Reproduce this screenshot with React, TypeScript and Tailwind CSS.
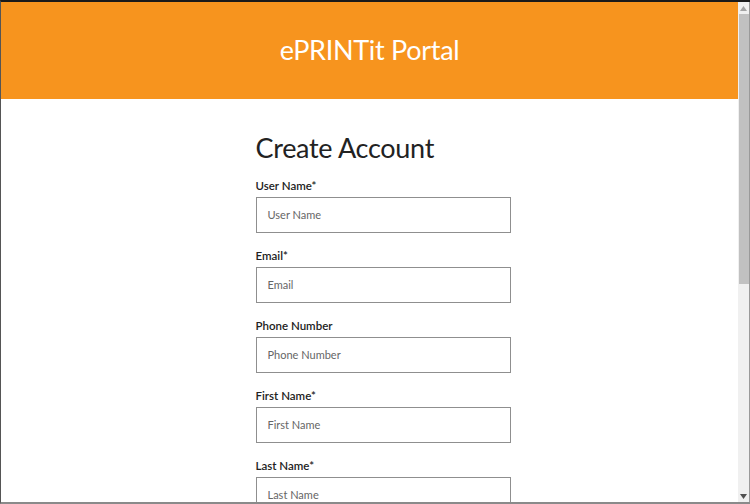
const fields = [
  { label: "User Name*", placeholder: "User Name" },
  { label: "Email*", placeholder: "Email" },
  { label: "Phone Number", placeholder: "Phone Number" },
  { label: "First Name*", placeholder: "First Name" },
  { label: "Last Name*", placeholder: "Last Name" },
  { label: "Password*", placeholder: "Password" },
]

function Field({ label, placeholder }: { label: string; placeholder: string }) {
  return (
    <div className="flex flex-col">
      <label className="text-[11.5px] leading-[16px] font-semibold text-[#222]">{label}</label>
      <div className="mt-[3px] w-[255px] h-[36px] border border-[#8f8f8f] flex items-center px-[11px]">
        <span className="text-[11px] text-[#666]">{placeholder}</span>
      </div>
    </div>
  )
}

function Scrollbar() {
  return (
    <div className="w-[12px] h-full bg-[#f0f0f0] border-r border-[#9a9a9a] flex flex-col items-center">
      <div className="h-[12px] flex items-center justify-center">
        <svg width="7" height="5" viewBox="0 0 7 5"><path d="M3.5 0L7 5H0z" fill="#a3a3a3" /></svg>
      </div>
      <div className="w-[10px] h-[270px] bg-[#c1c1c1]" />
      <div className="flex-1" />
      <div className="h-[12px] flex items-center justify-center">
        <svg width="7" height="5" viewBox="0 0 7 5"><path d="M0 0H7L3.5 5z" fill="#505050" /></svg>
      </div>
    </div>
  )
}

export default function App() {
  return (
    <div
      className="w-[750px] h-[504px] overflow-hidden bg-white border-t-[2px] border-t-[#1a1a1a] border-l border-l-[#555] border-b-[2px] border-b-[#8a8a8a] flex"
      style={{ fontFamily: "Lato, 'Open Sans', sans-serif" }}
    >
      <div className="flex-1 flex flex-col overflow-hidden">
        <header className="h-[97px] shrink-0 bg-[#f7941e] flex items-center justify-center">
          <h1 className="text-[27px] text-white font-normal tracking-[-0.3px]">ePRINTit Portal</h1>
        </header>
        <main className="flex justify-center">
          <div className="w-[255px] ml-[27px] pt-[30px] flex flex-col">
            <h2 className="text-[27px] leading-[38px] text-[#222] font-normal tracking-[-0.3px]">Create Account</h2>
            <div className="mt-[11px] flex flex-col gap-[15px]">
              {fields.map((f) => (
                <Field key={f.label} {...f} />
              ))}
            </div>
          </div>
        </main>
      </div>
      <Scrollbar />
    </div>
  )
}
